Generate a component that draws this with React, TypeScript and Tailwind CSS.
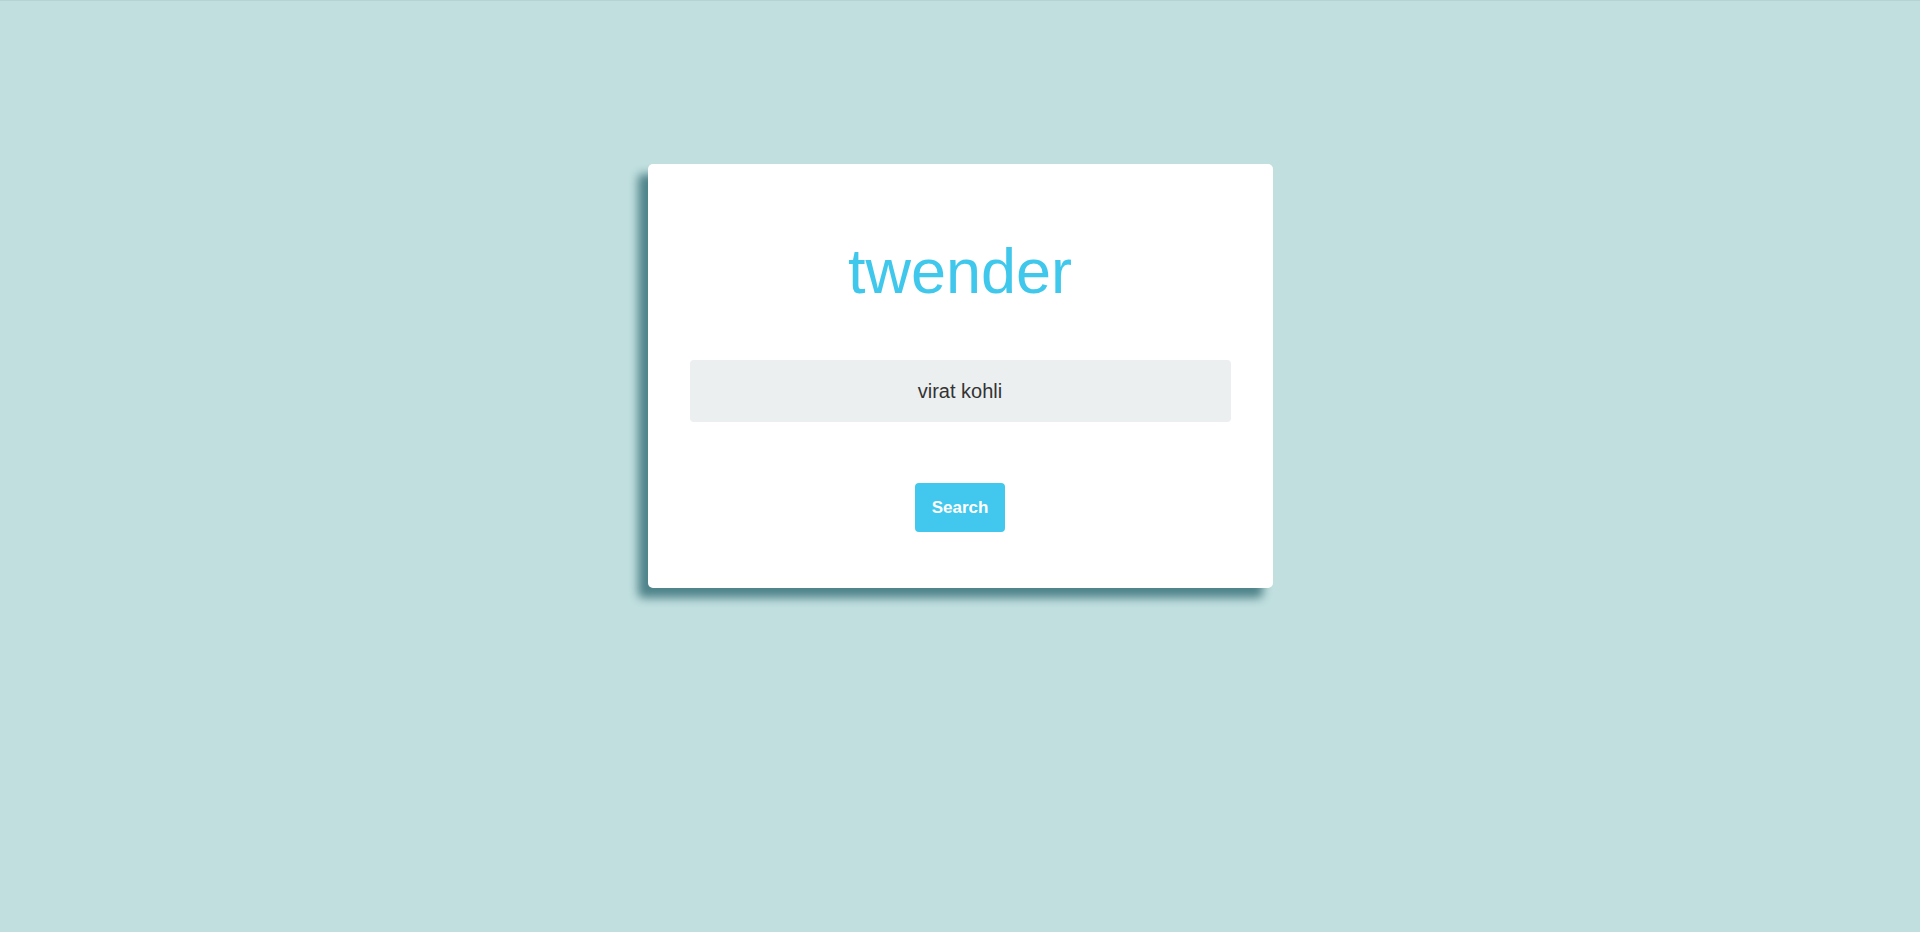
export default function App() {
  return (
    <div className="min-h-[932px] w-full bg-[#c1dfdf] border-t border-[#b6d2d4] font-['Liberation_Sans',Arial,sans-serif]">
      <div className="flex justify-center pt-[163px]">
        <div className="w-[625px] rounded-[5px] bg-white px-[42px] pt-[72px] pb-[56px] shadow-[-10px_10px_10px_#4f848b]">
          <h1 className="text-center text-[63px] leading-[71px] font-normal text-[#40c8ec]">twender</h1>
          <input
            type="text"
            defaultValue="virat kohli"
            className="mt-[53px] block h-[62px] w-full rounded-[4px] bg-[#ebeff0] text-center text-[20px] text-[#333333] outline-none"
          />
          <div className="mt-[61px] flex justify-center">
            <button className="h-[49px] w-[90px] rounded-[4px] bg-[#42c8ee] text-[17px] font-bold text-white">
              Search
            </button>
          </div>
        </div>
      </div>
    </div>
  );
}
